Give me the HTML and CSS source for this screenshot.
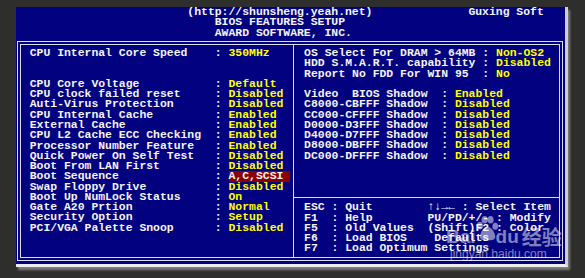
FILE: index.html
```html
<!DOCTYPE html>
<html lang="en">

<head>
    <meta charset="UTF-8">
    <meta name="viewport" content="width=device-width, initial-scale=1.0">
    <title>BIOS Features Setup</title>
    <link rel="stylesheet" href="styles.css">
</head>

<body>
    <div class="screen">
        <div class="header">
            <div class="line"><span class="url">(http://shunsheng.yeah.net)</span><span class="brand">Guxing Soft</span></div>
            <div class="line title">BIOS FEATURES SETUP</div>
            <div class="line title">AWARD SOFTWARE, INC.</div>
        </div>
        <div class="box">
            <div class="panel left">
                <div class="line spaced"><span class="label">CPU Internal Core Speed</span>: <span class="val">350MHz</span></div>
                <div class="line"><span class="label">CPU Core Voltage</span>: <span class="val">Default</span></div>
                <div class="line"><span class="label">CPU clock failed reset</span>: <span class="val">Disabled</span></div>
                <div class="line"><span class="label">Auti-Virus Protection</span>: <span class="val">Disabled</span></div>
                <div class="line"><span class="label">CPU Internal Cache</span>: <span class="val">Enabled</span></div>
                <div class="line"><span class="label">External Cache</span>: <span class="val">Enabled</span></div>
                <div class="line"><span class="label">CPU L2 Cache ECC Checking</span>: <span class="val">Enabled</span></div>
                <div class="line"><span class="label">Processor Number Feature</span>: <span class="val">Enabled</span></div>
                <div class="line"><span class="label">Quick Power On Self Test</span>: <span class="val">Disabled</span></div>
                <div class="line"><span class="label">Boot From LAN First</span>: <span class="val">Disabled</span></div>
                <div class="line"><span class="label">Boot Sequence</span>: <span class="sel">A,C,SCSI </span></div>
                <div class="line"><span class="label">Swap Floppy Drive</span>: <span class="val">Disabled</span></div>
                <div class="line"><span class="label">Boot Up NumLock Status</span>: <span class="val">On</span></div>
                <div class="line"><span class="label">Gate A20 Prtion</span>: <span class="val">Normal</span></div>
                <div class="line"><span class="label">Security Option</span>: <span class="val">Setup</span></div>
                <div class="line"><span class="label">PCI/VGA Palette Snoop</span>: <span class="val">Disabled</span></div>
            </div>
            <div class="panel right">
                <div class="top">
                    <div class="line"><span class="label">OS Select For DRAM &gt; 64MB</span>: <span class="val">Non-OS2</span></div>
                    <div class="line"><span class="label">HDD S.M.A.R.T. capability</span>: <span class="val">Disabled</span></div>
                    <div class="line spaced-one"><span class="label">Report No FDD For WIN 95</span>: <span class="val">No</span></div>
                    <div class="shadow">
                        <div class="line"><span class="label">Video  BIOS Shadow</span>: <span class="val">Enabled</span></div>
                        <div class="line"><span class="label">C8000-CBFFF Shadow</span>: <span class="val">Disabled</span></div>
                        <div class="line"><span class="label">CC000-CFFFF Shadow</span>: <span class="val">Disabled</span></div>
                        <div class="line"><span class="label">D0000-D3FFF Shadow</span>: <span class="val">Disabled</span></div>
                        <div class="line"><span class="label">D4000-D7FFF Shadow</span>: <span class="val">Disabled</span></div>
                        <div class="line"><span class="label">D8000-DBFFF Shadow</span>: <span class="val">Disabled</span></div>
                        <div class="line"><span class="label">DC000-DFFFF Shadow</span>: <span class="val">Disabled</span></div>
                    </div>
                </div>
                <div class="keys">
                    <div class="line"><span class="key">ESC</span>: <span class="act">Quit</span>↑↓→← : Select Item</div>
                    <div class="line"><span class="key">F1</span>: <span class="act">Help</span>PU/PD/+/- : Modify</div>
                    <div class="line"><span class="key">F5</span>: <span class="act">Old Values</span>(Shift)F2 : Color</div>
                    <div class="line"><span class="key">F6</span>: Load BIOS    Defaults</div>
                    <div class="line"><span class="key">F7</span>: Load Optimum Settings</div>
                </div>
            </div>
        </div>
    </div>

    <div class="watermark">
        <div class="wm-logo">Bai<svg class="paw" width="24" height="26" viewBox="0 0 20 22">
                <ellipse cx="4" cy="9" rx="2.6" ry="3.2" />
                <ellipse cx="8" cy="4" rx="2.6" ry="3.2" />
                <ellipse cx="13" cy="4" rx="2.6" ry="3.2" />
                <ellipse cx="17" cy="9.5" rx="2.4" ry="3" />
                <path d="M10.5 10c-3 0-6.5 5-6.5 8.5 0 2.5 2.5 3 6.5 3s6.5-.5 6.5-3c0-3.5-3.5-8.5-6.5-8.5z" />
            </svg>du<span class="wm-cn">经验</span></div>
        <div class="wm-url">jingyan.baidu.com</div>
    </div>
</body>

</html>
```

FILE: styles.css
```css
body {
    margin: 0;
    padding: 7px 0 0 16px;
    width: 585px;
    height: 278px;
    box-sizing: border-box;
    overflow: hidden;
    position: relative;
    background-color: #2e2e2c;
}

.screen {
    width: 549px;
    height: 257px;
    background-color: #020280;
    color: #f4f4f4;
    font-family: 'Liberation Mono', 'DejaVu Sans Mono', monospace;
    font-weight: bold;
    font-size: 11.43px;
    border-right: 3px solid #cfcfcf;
    border-bottom: 3px solid #ededed;
    box-shadow: 2px 3px 2px #7c7c7c;
}

.line {
    height: 10.28px;
    line-height: 10.28px;
    white-space: pre;
}

.header {
    height: 30.84px;
    margin-bottom: 3.16px;
}

.url {
    margin-left: 25ch;
}

.brand {
    margin-left: 14ch;
}

.title {
    padding-left: 29ch;
}

.box {
    display: flex;
    width: 546px;
    height: 220px;
    margin-left: 1px;
    box-sizing: border-box;
    border: 1px solid #dcdcec;
    padding: 2px;
    box-shadow: inset 0 0 0 2px #020280, inset 0 0 0 3px #dcdcec;
}

.panel {
    box-sizing: border-box;
    padding-top: 4.12px;
}

.left {
    width: 273px;
    padding-left: 9.72px;
}

.left .label {
    display: inline-block;
    width: 27ch;
}

.spaced {
    margin-bottom: 20.56px;
}

.spaced-one {
    margin-bottom: 10.28px;
}

.right {
    flex: 1;
    border-left: 1px solid #dcdcec;
}

.top {
    height: 143.92px;
    padding-left: 10.12px;
}

.right .label {
    display: inline-block;
    width: 26ch;
}

.shadow .label {
    width: 20ch;
}

.keys {
    margin-top: 4.96px;
    border-top: 1px solid #dcdcec;
    padding: 4.32px 0 0 10.12px;
}

.key {
    display: inline-block;
    width: 4ch;
}

.act {
    display: inline-block;
    width: 12ch;
}

.val {
    color: #ffff00;
}

.sel {
    display: inline-block;
    height: 10.28px;
    line-height: 10.28px;
    vertical-align: top;
    background-color: #8a0000;
}

.watermark {
    position: absolute;
    left: 446px;
    top: 214px;
    color: rgba(255, 255, 255, 0.5);
    font-family: 'Liberation Sans', Arial, sans-serif;
    font-weight: bold;
}

.wm-logo {
    display: flex;
    align-items: flex-end;
    font-size: 19px;
    line-height: 22px;
    height: 34px;
}

.paw {
    fill: rgba(255, 255, 255, 0.5);
    margin: 0 -3px 7px -1px;
}

.wm-cn {
    font-family: 'Noto Sans CJK SC', sans-serif;
    font-size: 20px;
    margin-left: 3px;
}

.wm-url {
    font-size: 12px;
    line-height: 12px;
    margin-left: 4px;
    font-weight: normal;
}
```
